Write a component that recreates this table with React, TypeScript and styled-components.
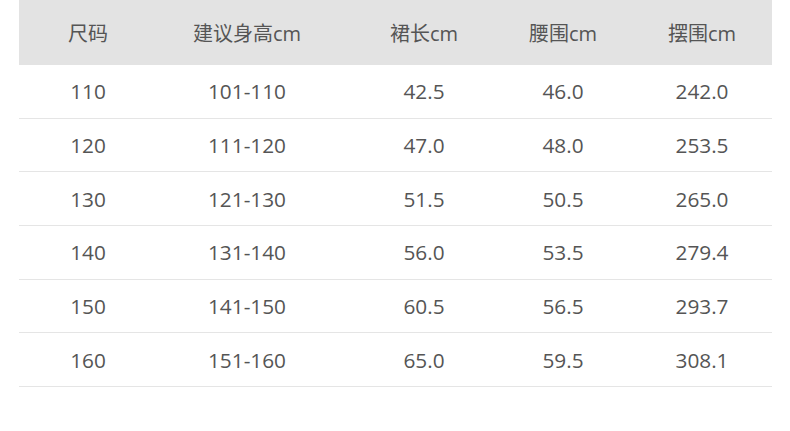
import React from 'react'
import styled, { createGlobalStyle } from 'styled-components'

const GlobalStyle = createGlobalStyle`
  html, body {
    margin: 0;
    padding: 0;
    background: #ffffff;
  }
  body {
    font-family: 'Open Sans', 'Noto Sans CJK SC', sans-serif;
  }
`

const Page = styled.div`
  width: 790px;
  height: 431px;
  padding: 0 18px 0 19px;
  box-sizing: border-box;
`

const Table = styled.div`
  width: 753px;
  display: grid;
  grid-template-columns: 138px 180px 174px 104px 157px;
  grid-template-rows: 65px repeat(6, 53.67px);
`

const HeadCell = styled.div<{ $shift: number }>`
  background: #e3e3e3;
  display: flex;
  align-items: center;
  justify-content: center;
  padding-left: ${({ $shift }) => $shift}px;
  font-size: 20px;
  color: #555555;
`

const Cell = styled.div<{ $shift: number }>`
  box-sizing: border-box;
  border-bottom: 1px solid #e5e5e5;
  display: flex;
  align-items: center;
  justify-content: center;
  padding-left: ${({ $shift }) => $shift}px;
  font-size: 20.8px;
  color: #555555;
`

const columns = [
  { title: '尺码', shift: 0 },
  { title: '建议身高cm', shift: 0 },
  { title: '裙长cm', shift: 0 },
  { title: '腰围cm', shift: 0 },
  { title: '摆围cm', shift: 17 },
]

const rows = [
  ['110', '101-110', '42.5', '46.0', '242.0'],
  ['120', '111-120', '47.0', '48.0', '253.5'],
  ['130', '121-130', '51.5', '50.5', '265.0'],
  ['140', '131-140', '56.0', '53.5', '279.4'],
  ['150', '141-150', '60.5', '56.5', '293.7'],
  ['160', '151-160', '65.0', '59.5', '308.1'],
]

function App() {
  return (
    <>
      <GlobalStyle />
      <Page>
        <Table>
          {columns.map((col) => (
            <HeadCell key={col.title} $shift={col.shift}>
              {col.title}
            </HeadCell>
          ))}
          {rows.map((row, r) =>
            row.map((value, c) => (
              <Cell key={`${r}-${c}`} $shift={columns[c].shift}>
                {value}
              </Cell>
            ))
          )}
        </Table>
      </Page>
    </>
  )
}

export default App
